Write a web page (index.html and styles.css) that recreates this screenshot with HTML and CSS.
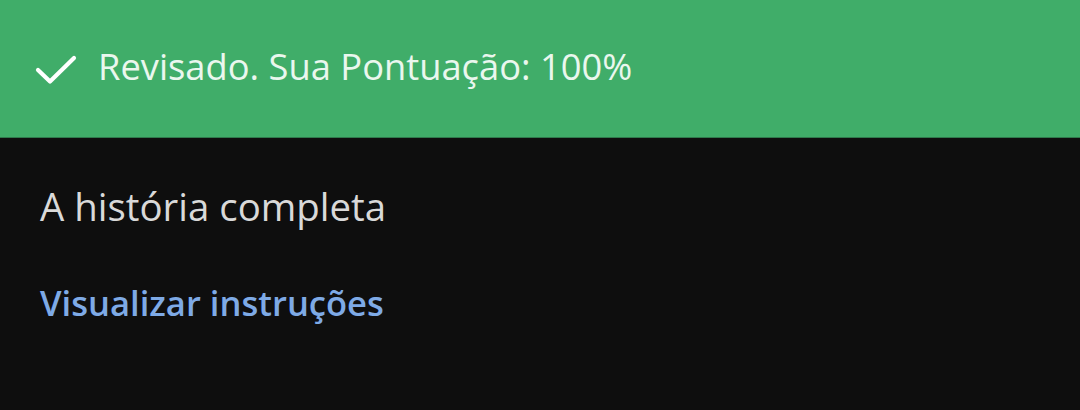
FILE: index.html
```html
<!DOCTYPE html>
<html lang="pt">
<head>
<meta charset="utf-8">
<link rel="stylesheet" href="styles.css">
</head>
<body>
<div class="banner">
  <svg class="check" viewBox="0 0 42 30" width="42" height="30" aria-hidden="true">
    <path d="M3 15 L15 26.5 L39 3" fill="none" stroke="#ffffff" stroke-width="4.2" stroke-linecap="round" stroke-linejoin="round"/>
  </svg>
  <span class="banner-text">Revisado. Sua Pontuação: 100%</span>
</div>
<div class="content">
  <div class="title">A história completa</div>
  <a class="link" href="#">Visualizar instruções</a>
</div>
</body>
</html>
```
FILE: styles.css
```css
html, body {
  margin: 0;
  padding: 0;
  background: #0e0e0e;
  width: 1080px;
  height: 410px;
  overflow: hidden;
  font-family: "Open Sans", "Noto Sans", sans-serif;
}
.banner {
  height: 137px;
  background: #40ad69;
  border-bottom: 1px solid #2f7a4c;
  display: flex;
  align-items: center;
  padding-left: 35px;
  gap: 21px;
}
.check {
  flex: none;
  margin-top: 2px;
}
.banner-text {
  color: #eaf7ee;
  font-size: 36.3px;
  margin-bottom: 6px;
}
.content {
  padding: 46px 40px 0;
  display: flex;
  flex-direction: column;
  align-items: flex-start;
}
.title {
  color: #d9d9d9;
  font-size: 38.4px;
  line-height: 44px;
}
.link {
  margin-top: 53px;
  color: #7eaae6;
  font-size: 34.6px;
  font-weight: 600;
  text-decoration: none;
  line-height: 44px;
}
```
